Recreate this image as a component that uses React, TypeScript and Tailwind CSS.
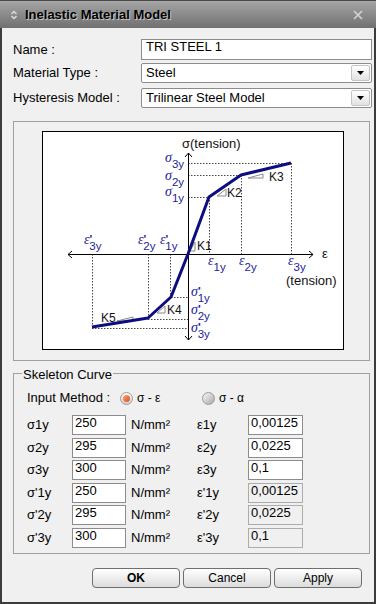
import React from 'react';

const NAVY = '#1c1c9a';

// Symbol label with subscript (and optional prime) as one text run.
function Sym({ x, y, g, sub, prime }: { x: number; y: number; g: string; sub: string; prime?: boolean }) {
  return (
    <text x={x} y={y} fill={NAVY} fontSize={11.5} fontFamily="'Liberation Sans', sans-serif">
      <tspan fontSize={14} fontStyle="italic" fontFamily="'Liberation Serif', serif">
        {g}
      </tspan>
      {prime ? (
        <>
          <tspan dy={-1} fontWeight="bold">
            '
          </tspan>
          <tspan dx={-3} dy={7}>
            {sub}
          </tspan>
        </>
      ) : (
        <tspan dy={6}>{sub}</tspan>
      )}
    </text>
  );
}

function Slope({ x1, x2, y1, y2 }: { x1: number; x2: number; y1: number; y2: number }) {
  return <polygon points={`${x1},${y2} ${x2},${y2} ${x2},${y1}`} fill="none" stroke="#8a8a8a" strokeWidth={1} />;
}

function Chart() {
  const dot = { stroke: '#444', strokeWidth: 1, strokeDasharray: '1.5 1.5' };
  const k = { fontSize: 12, fontFamily: "'Liberation Sans', sans-serif", fill: '#111' };
  return (
    <div className="w-[302px] h-[219px] border border-black bg-white">
      <svg width={300} height={217} viewBox="43 132 300 217">
        {/* guides, tension side */}
        <line x1={188} y1={163.5} x2={291} y2={163.5} {...dot} />
        <line x1={291.5} y1={163} x2={291.5} y2={254} {...dot} />
        <line x1={188} y1={175.5} x2={241} y2={175.5} {...dot} />
        <line x1={241.5} y1={175} x2={241.5} y2={254} {...dot} />
        <line x1={188} y1={197.5} x2={209} y2={197.5} {...dot} />
        <line x1={209.5} y1={197} x2={209.5} y2={254} {...dot} />
        {/* guides, compression side */}
        <line x1={92.5} y1={254} x2={92.5} y2={327} {...dot} />
        <line x1={92} y1={328.5} x2={188} y2={328.5} {...dot} />
        <line x1={148.5} y1={254} x2={148.5} y2={318} {...dot} />
        <line x1={148} y1={319.5} x2={188} y2={319.5} {...dot} />
        <line x1={170.5} y1={254} x2={170.5} y2={297} {...dot} />
        <line x1={171} y1={297.5} x2={188} y2={297.5} {...dot} />

        {/* axes */}
        <g stroke="#000" strokeWidth={1} fill="none">
          <line x1={188.5} y1={153} x2={188.5} y2={340} />
          <polyline points="185,157 188.5,153 192,157" />
          <polyline points="185,336 188.5,340 192,336" />
          <line x1={68} y1={254.5} x2={313} y2={254.5} />
          <polyline points="72,251 68,254.5 72,258" />
          <polyline points="309,251 313,254.5 309,258" />
        </g>

        <Slope x1={217} x2={226} y1={189} y2={196} />
        <Slope x1={248} x2={263} y1={174} y2={178} />
        <Slope x1={190} x2={195} y1={242} y2={251} />
        <Slope x1={157} x2={165} y1={306} y2={313} />
        <Slope x1={117} x2={133} y1={317} y2={321} />

        <polyline
          points="92,327 148,318 171,297 188,254 209,197 241,175 291,163"
          fill="none"
          stroke="#0d0d80"
          strokeWidth={3}
          strokeLinejoin="round"
        />

        <text x={182} y={148} fontSize={13} fontFamily="'Liberation Sans', sans-serif" fill="#111">
          σ(tension)
        </text>
        <text x={322} y={258} fontSize={13} fontFamily="'Liberation Sans', sans-serif" fill="#111">
          ε
        </text>
        <text x={286} y={285} fontSize={13} fontFamily="'Liberation Sans', sans-serif" fill="#111">
          (tension)
        </text>

        <Sym x={165} y={162} g="σ" sub="3y" />
        <Sym x={165} y={180} g="σ" sub="2y" />
        <Sym x={165} y={196} g="σ" sub="1y" />
        <Sym x={84} y={244} g="ε" sub="3y" prime />
        <Sym x={138} y={244} g="ε" sub="2y" prime />
        <Sym x={160} y={244} g="ε" sub="1y" prime />
        <Sym x={208} y={265} g="ε" sub="1y" />
        <Sym x={239} y={265} g="ε" sub="2y" />
        <Sym x={288} y={265} g="ε" sub="3y" />
        <Sym x={191} y={296} g="σ" sub="1y" prime />
        <Sym x={191} y={314} g="σ" sub="2y" prime />
        <Sym x={191} y={332} g="σ" sub="3y" prime />

        <text x={227} y={197} {...k}>K2</text>
        <text x={269} y={181} {...k}>K3</text>
        <text x={197} y={250} {...k}>K1</text>
        <text x={167} y={314} {...k}>K4</text>
        <text x={101} y={322} {...k}>K5</text>
      </svg>
    </div>
  );
}

function Select({ value }: { value: string }) {
  return (
    <div className="w-[231px] h-full flex border border-[#8c8c8c] rounded-[2px] bg-white">
      <div className="flex-1 pl-[4px] flex items-center">{value}</div>
      <div className="w-[19px] m-[1px] rounded-[2px] border border-[#c4c4c4] bg-gradient-to-b from-white to-[#e2e2e2] flex items-center justify-center">
        <svg width={7} height={4} viewBox="0 0 7 4">
          <polygon points="0,0 7,0 3.5,4" fill="#000" />
        </svg>
      </div>
    </div>
  );
}

function Radio({ on }: { on: boolean }) {
  return on ? (
    <span className="w-[13px] h-[13px] rounded-full border border-[#9a9a9a] bg-gradient-to-b from-white to-[#d0d0d0] flex items-center justify-center">
      <span className="w-[7px] h-[7px] rounded-full bg-gradient-to-br from-[#ffa070] to-[#e04a10]" />
    </span>
  ) : (
    <span className="w-[13px] h-[13px] rounded-full border border-[#9a9a9a] bg-gradient-to-br from-[#fafafa] to-[#a8a8a8]" />
  );
}

const rows: [string, string, string, string, boolean, string][] = [
  ['σ1y', '250', 'ε1y', '0,00125', false, 'mt-0'],
  ['σ2y', '295', 'ε2y', '0,0225', false, 'mt-[3px]'],
  ['σ3y', '300', 'ε3y', '0,1', false, 'mt-[2px]'],
  ["σ'1y", '250', "ε'1y", '0,00125', true, 'mt-[3px]'],
  ["σ'2y", '295', "ε'2y", '0,0225', true, 'mt-[2px]'],
  ["σ'3y", '300', "ε'3y", '0,1', true, 'mt-[3px]'],
];

function Btn({ label, bold }: { label: string; bold?: boolean }) {
  return (
    <button
      className={`w-[88px] h-[20px] rounded-[4px] border border-[#6e6e6e] bg-gradient-to-b from-white to-[#dcdcdc] text-[12px] leading-none ${
        bold ? 'font-bold' : ''
      }`}
    >
      {label}
    </button>
  );
}

export default function App() {
  return (
    <div className="w-[376px] h-[604px] flex flex-col bg-[#f0f0f0] text-[13px] text-black font-['Liberation_Sans',sans-serif] overflow-hidden">
      {/* title bar */}
      <div className="h-[28px] flex items-center border-t border-[#4a4a4a] bg-gradient-to-b from-[#a6a6a6] to-[#707070] pl-[10px] pr-[13px] flex-shrink-0">
        <svg width={8} height={10} viewBox="0 0 8 10" className="mr-[7px]">
          <polyline points="1.5,4 4,1.5 6.5,4" fill="none" stroke="#dcdcdc" strokeWidth={1.5} />
          <polyline points="1.5,6 4,8.5 6.5,6" fill="none" stroke="#dcdcdc" strokeWidth={1.5} />
        </svg>
        <span className="font-bold text-[13px] [text-shadow:1px_1px_0_#c8c8c8]">Inelastic Material Model</span>
        <svg width={10} height={10} viewBox="0 0 10 10" className="ml-auto">
          <path d="M1 1 L9 9 M9 1 L1 9" stroke="#d4d4d4" strokeWidth={1.6} />
        </svg>
      </div>

      <div className="flex-1 flex flex-col border-x-2 border-b-2 border-[#3c3c3c] pl-[11px]">
        <div className="mt-[11px] h-[21px] flex items-center">
          <span className="w-[128px]">Name :</span>
          <div className="w-[231px] h-full border border-[#8c8c8c] bg-white pl-[4px] leading-[13px] pt-0">TRI STEEL 1</div>
        </div>
        <div className="mt-[3px] h-[20px] flex items-center">
          <span className="w-[128px]">Material Type :</span>
          <Select value="Steel" />
        </div>
        <div className="mt-[5px] h-[20px] flex items-center">
          <span className="w-[128px]">Hysteresis Model :</span>
          <Select value="Trilinear Steel Model" />
        </div>

        <div className="mt-[13px] w-[357px] h-[240px] border border-[#a0a0a0] pl-[28px] pt-[9px]">
          <Chart />
        </div>

        <div className="relative mt-[12px] w-[357px] h-[181px] border border-[#a0a0a0] pl-[13px] pt-[16px]">
          <span className="absolute left-[8px] -top-[9px] px-[1px] bg-[#f0f0f0]">Skeleton Curve</span>
          <div className="h-[16px] flex items-center">
            <span className="w-[93px]">Input Method :</span>
            <Radio on />
            <span className="ml-[4px] w-[65px] text-[12px]">σ - ε</span>
            <Radio on={false} />
            <span className="ml-[4px] text-[12px]">σ - α</span>
          </div>
          <div className="mt-[9px] flex flex-col">
            {rows.map(([a, av, b, bv, dis, mt]) => (
              <div key={a} className={`h-[20px] flex items-center ${mt}`}>
                <span className="w-[45px]">{a}</span>
                <div className="w-[54px] h-full border border-[#8c8c8c] bg-white pl-[2px] leading-[13px]">{av}</div>
                <span className="ml-[5px] w-[66px]">N/mm²</span>
                <span className="w-[51px]">{b}</span>
                <div
                  className={`w-[55px] h-full border pl-[2px] leading-[13px] ${
                    dis ? 'border-[#acacac] bg-[#f0f0f0]' : 'border-[#8c8c8c] bg-white'
                  }`}
                >
                  {bv}
                </div>
              </div>
            ))}
          </div>
        </div>

        <div className="mt-[14px] flex justify-end gap-[3px] pr-[12px]">
          <Btn label="OK" bold />
          <Btn label="Cancel" />
          <Btn label="Apply" />
        </div>
      </div>
    </div>
  );
}
